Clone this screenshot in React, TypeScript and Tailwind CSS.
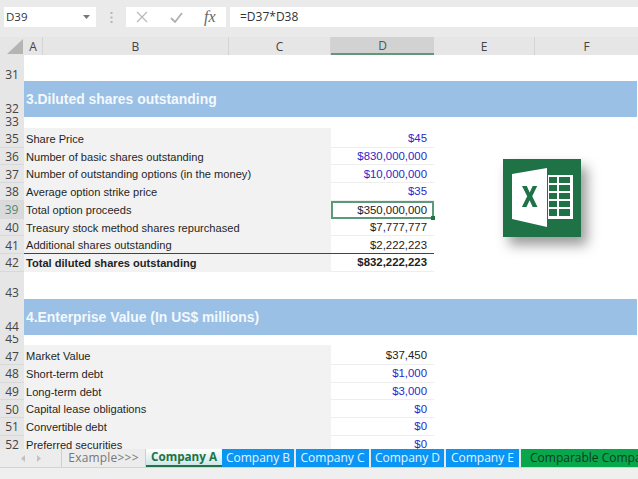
import React from "react";

const sans = "font-['Liberation_Sans',Arial,sans-serif]";
const ui = "font-['Open_Sans','Noto_Sans',sans-serif]";

type Row = { n: string; label?: string; value?: string; blue?: boolean; bold?: boolean; active?: boolean; underline?: boolean; first?: boolean };

const block1: Row[] = [
  { n: "35", label: "Share Price", value: "$45", blue: true, first: true },
  { n: "36", label: "Number of basic shares outstanding", value: "$830,000,000", blue: true },
  { n: "37", label: "Number of outstanding options (in the money)", value: "$10,000,000", blue: true },
  { n: "38", label: "Average option strike price", value: "$35", blue: true },
  { n: "39", label: "Total option proceeds", value: "$350,000,000", active: true },
  { n: "40", label: "Treasury stock method shares repurchased", value: "$7,777,777" },
  { n: "41", label: "Additional shares outstanding", value: "$2,222,223", underline: true },
  { n: "42", label: "Total diluted shares outstanding", value: "$832,222,223", bold: true },
];
const block2: Row[] = [
  { n: "47", label: "Market Value", value: "$37,450", first: true },
  { n: "48", label: "Short-term debt", value: "$1,000", blue: true },
  { n: "49", label: "Long-term debt", value: "$3,000", blue: true },
  { n: "50", label: "Capital lease obligations", value: "$0", blue: true },
  { n: "51", label: "Convertible debt", value: "$0", blue: true },
  { n: "52", label: "Preferred securities", value: "$0", blue: true },
];

function RowHead({ n, active, cls, spanCls = "" }: { n: string; active?: boolean; cls: string; spanCls?: string }) {
  return (
    <div className={`w-[24px] shrink-0 flex justify-center ${ui} text-[12px] leading-[15px] ${cls} ${active ? "bg-[#dadada] text-[#4f8a6b] border-r border-[#217346]" : "bg-[#e6e6e6] text-[#444444]"}`}>
      <span className={spanCls}>{n}</span>
    </div>
  );
}

function DataRow({ r }: { r: Row }) {
  const pad = r.first ? "pt-[3px]" : "pt-[1px]";
  return (
    <div className={`flex shrink-0 ${r.first ? "h-[19.5px]" : "h-[17.75px]"}`}>
      <RowHead n={r.n} active={r.active} cls={`items-center ${pad} border-b border-[#d8d8d8]`} />
      <div className={`w-[307px] shrink-0 bg-[#f2f2f2] pl-[2px] flex items-center ${pad} ${sans} text-[11.1px] whitespace-nowrap text-[#1f1f1f] ${r.bold ? "font-bold" : ""} ${r.underline ? "border-b border-[#444444]" : ""}`}>
        {r.label}
      </div>
      <div className={`w-[103px] shrink-0 flex items-center justify-end ${pad} ${sans} text-[11.4px] ${r.blue ? "text-[#2a2ac8]" : "text-[#222222]"} ${r.bold ? "font-bold" : ""} ${r.active ? "border-2 border-[#5a9a78] pr-[5px] relative" : r.underline ? "border-b border-[#444444] pr-[7px]" : "border-b border-[#eeeeee] pr-[7px]"}`}>
        {r.value}
        {r.active && <span className="absolute right-[-3px] bottom-[-3px] w-[4px] h-[4px] bg-[#217346]" />}
      </div>
      <div className="flex-1 bg-white" />
    </div>
  );
}

function Band({ n, title }: { n: string; title: string }) {
  return (
    <div className="flex h-[36px] shrink-0">
      <RowHead n={n} cls="items-end pb-[1px]" />
      <div className={`flex-1 bg-[#9ac0e6] pl-[2px] flex items-center ${sans} font-bold text-[13.9px] text-[#f4f8fc]`}>{title}</div>
    </div>
  );
}

function Spacer({ n, h }: { n: string; h: string }) {
  return (
    <div className={`flex shrink-0 ${h}`}>
      <RowHead n={n} cls="items-end overflow-hidden" spanCls="-mb-[1px]" />
      <div className="flex-1 bg-white" />
    </div>
  );
}

function ExcelLogo() {
  return (
    <svg viewBox="0 0 78 78" className="w-[78px] h-[78px]">
      <rect width="78" height="78" fill="#1f7246" />
      <path d="M45 16 H70 V60 H45 Z" fill="#ffffff" />
      <path d="M9 15 L44 9 V68 L9 60 Z" fill="#ffffff" />
      <path d="M19 27 h4.800 l2.900 6.500 l3 -6.500 h4.500 l-5 10.200 l5.300 10.800 h-4.800 l-3.100 -6.800 l-3.100 6.800 h-4.600 l5.300 -10.800 Z" fill="#1f7246" />
      <g fill="#1f7246">
        <rect x="46" y="18" width="8" height="6" />
        <rect x="56" y="18" width="11" height="6" />
        <rect x="46" y="26" width="8" height="6" />
        <rect x="56" y="26" width="11" height="6" />
        <rect x="46" y="34" width="8" height="6" />
        <rect x="56" y="34" width="11" height="6" />
        <rect x="46" y="42" width="8" height="6" />
        <rect x="56" y="42" width="11" height="6" />
        <rect x="46" y="50" width="8" height="7" />
        <rect x="56" y="50" width="11" height="7" />
      </g>
    </svg>
  );
}

const tabs: { t: string; w: string }[] = [
  { t: "Company B", w: "w-[74px]" },
  { t: "Company C", w: "w-[75px]" },
  { t: "Company D", w: "w-[75px]" },
  { t: "Company E", w: "w-[75px]" },
];

export default function App() {
  const col = "flex items-center justify-center pt-[1px] border-r border-[#d4d4d4] h-full";
  return (
    <div className="relative w-[638px] h-[479px] overflow-hidden bg-[#efefef]">
      {/* formula bar */}
      <div className="h-[37px] bg-[#eaeaea] flex items-start pt-[7px] pl-[4px]">
        <div className={`w-[92px] h-[20px] bg-white flex items-center justify-between pl-[2px] pr-[6px] ${ui} text-[11.5px] text-[#333333]`}>
          <span>D39</span>
          <svg width="7" height="4" viewBox="0 0 7 4"><path d="M0 0H7L3.500 4Z" fill="#777777" /></svg>
        </div>
        <div className="w-[30px] h-[20px] flex items-center justify-center">
          <svg width="3" height="11" viewBox="0 0 3 11" fill="#b5b5b5"><rect x="0.500" y="0" width="2" height="2" /><rect x="0.500" y="4.500" width="2" height="2" /><rect x="0.500" y="9" width="2" height="2" /></svg>
        </div>
        <div className="w-[100px] h-[20px] bg-white flex items-center">
          <svg width="12" height="12" viewBox="0 0 12 12" className="ml-[10px]" stroke="#b8b8b8" strokeWidth="1.200" fill="none"><path d="M1 1L11 11M11 1L1 11" /></svg>
          <svg width="13" height="11" viewBox="0 0 13 11" className="ml-[22px]" stroke="#b0b0b0" strokeWidth="1.800" fill="none"><path d="M1 6L5 10L12 1" /></svg>
          <span className="ml-[21px] font-['Liberation_Serif',serif] italic text-[16px] text-[#666666]">fx</span>
        </div>
        <div className={`ml-[4px] flex-1 h-[20px] bg-white flex items-center pl-[10px] ${ui} text-[12px] text-[#333333]`}>=D37*D38</div>
      </div>

      {/* column headers */}
      <div className={`flex h-[18px] bg-[#e6e6e6] ${ui} text-[12px] text-[#444444]`}>
        <div className="w-[24px] flex items-end justify-end pr-[1px] pb-[1px]">
          <svg width="16" height="15" viewBox="0 0 16 15"><path d="M16 0V15H0Z" fill="#b4b4b4" /></svg>
        </div>
        <div className={`w-[19px] ${col}`}>A</div>
        <div className={`w-[186px] ${col}`}>B</div>
        <div className={`w-[102px] ${col}`}>C</div>
        <div className="w-[103px] flex items-center justify-center pt-[1px] h-full bg-[#d2d2d2] border-b-2 border-[#5f9a78] text-[#35654c]">D</div>
        <div className={`w-[101px] ${col}`}>E</div>
        <div className="w-[103px] flex items-center justify-center pt-[1px] h-full">F</div>
      </div>

      {/* sheet */}
      <div className="flex flex-col h-[394px] overflow-hidden bg-white pr-[1px]">
        <Spacer n="31" h="h-[26px]" />
        <Band n="32" title="3.Diluted shares outstanding" />
        <Spacer n="33" h="h-[11px]" />
        {block1.map((r) => <DataRow key={r.n} r={r} />)}
        <Spacer n="43" h="h-[27.5px]" />
        <Band n="44" title="4.Enterprise Value (In US$ millions)" />
        <Spacer n="45" h="h-[10px]" />
        {block2.map((r) => <DataRow key={r.n} r={r} />)}
      </div>

      {/* tab strip */}
      <div className={`flex h-[19px] bg-[#ececec] ${ui} text-[12px] whitespace-nowrap border-b border-[#d4d4d4]`}>
        <div className="w-[62px] shrink-0 flex items-center justify-center gap-[12px] border-r border-[#cfcfcf]">
          <svg width="4" height="7" viewBox="0 0 4 7"><path d="M4 0V7L0 3.500Z" fill="#c2c2c2" /></svg>
          <svg width="4" height="7" viewBox="0 0 4 7"><path d="M0 0V7L4 3.500Z" fill="#c2c2c2" /></svg>
        </div>
        <div className="w-[84px] shrink-0 flex items-center justify-center tracking-[0.2px] text-[#777777] border-r border-[#cfcfcf]">Example&gt;&gt;&gt;</div>
        <div className="w-[76px] shrink-0 flex items-center justify-center font-bold text-[11.7px] text-[#217346] bg-gradient-to-b from-white to-[#cfe6ea] border-b-2 border-[#217346]">Company A</div>
        {tabs.map((t) => (
          <div key={t.t} className={`${t.w} shrink-0 flex items-center justify-center bg-[#0a95f5] text-[#e6f4ff] border-r-2 border-[#e8e8e8]`}>{t.t}</div>
        ))}
        <div className="flex-1 min-w-0 overflow-hidden bg-[#08a74c] text-[#0d3b22] pl-[9px] flex items-center">Comparable Company</div>
      </div>

      {/* embedded picture floating over the sheet */}
      <div className="absolute left-[503px] top-[159px] shadow-[6px_8px_12px_rgba(0,0,0,0.4)]">
        <ExcelLogo />
      </div>
    </div>
  );
}
